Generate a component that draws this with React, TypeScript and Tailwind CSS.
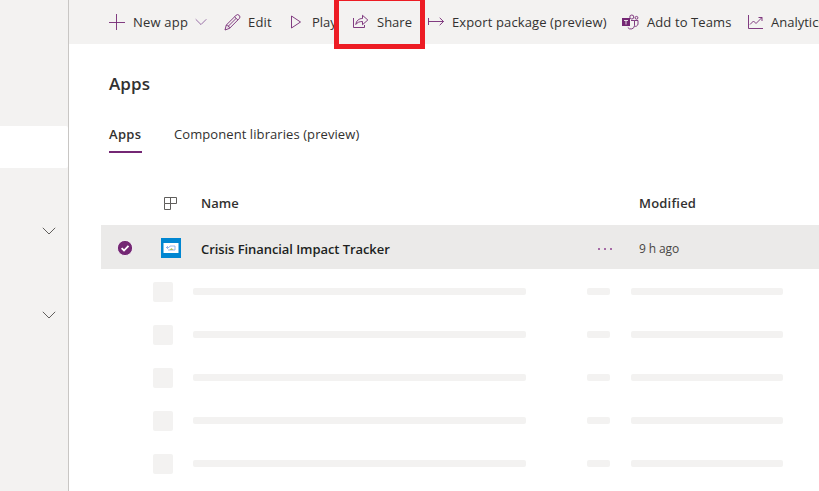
import type { ReactNode } from 'react';

const stroke = { fill: 'none', stroke: '#742774', strokeWidth: 0.9 };

function Chevron({ className }: { className: string }) {
  return (
    <svg className={className} width="14" height="8" viewBox="0 0 14 8" fill="none" stroke="currentColor">
      <path d="M.8.8 7 7 13.2.8" />
    </svg>
  );
}

function PlusIcon() {
  return (
    <svg width="17" height="16" viewBox="0 0 17 16" {...stroke}>
      <path d="M8.5 0v16M1 8.5h16" />
    </svg>
  );
}

function EditIcon() {
  return (
    <svg width="17" height="17" viewBox="0 0 17 17" {...stroke}>
      <path d="M1 16l1.3-5L12 1.4a2.2 2.2 0 0 1 3.2 0 2.2 2.2 0 0 1 0 3.2L5.6 14.3 1 16zM10.6 2.8l3.4 3.4M2.3 11c1.8.2 3 1.5 3.3 3.3M3.7 12.8l8.3-8.3" />
    </svg>
  );
}

function PlayIcon() {
  return (
    <svg width="13" height="16" viewBox="0 0 13 16" {...stroke}>
      <path d="M1.5 2v12L10.500 8z" />
    </svg>
  );
}

function ShareIcon() {
  return (
    <svg width="17" height="16" viewBox="0 0 17 16" {...stroke}>
      <path d="M1.5 4v9.500h11V11M3.800 10.500C4.300 6.700 6.800 4.500 10.500 4.500V1.300L15.800 6l-5.300 4.700V7.500C7.500 7.500 5.300 8.300 3.800 10.500z" />
    </svg>
  );
}

function ExportIcon() {
  return (
    <svg width="17" height="16" viewBox="0 0 17 16" {...stroke}>
      <path d="M.5 4v7M.5 7.500h15M11.700 3.800l3.800 3.700-3.800 3.700" />
    </svg>
  );
}

function TeamsIcon() {
  return (
    <svg width="18" height="17" viewBox="0 0 18 17" {...stroke}>
      <circle cx="9.800" cy="3" r="2" />
      <circle cx="14.500" cy="3.800" r="1.400" />
      <path d="M9 6.500h3.500v5a3.700 3.700 0 0 1-6.700 2M12.500 6.500h3.500V10a2.600 2.600 0 0 1-3.500 2.200" />
      <path d="M0 4h8v8H0z" fill="#742774" stroke="none" />
      <path d="M2 6.500h4M4 6.500v4" stroke="#f3f2f1" />
    </svg>
  );
}

function AnalyticsIcon() {
  return (
    <svg width="16" height="16" viewBox="0 0 16 16" {...stroke}>
      <path d="M.5 1v13.500H15M2 10.500l3.500-3.500 2.500 2.500L14 3.500M10.500 3.500h3.500V7" />
    </svg>
  );
}

function Command({ width, gutter, icon, children }: { width: string; gutter: string; icon: ReactNode; children: ReactNode }) {
  return (
    <div className={`flex h-full shrink-0 items-center whitespace-nowrap ${width}`}>
      <span className={`flex shrink-0 ${gutter}`}>{icon}</span>
      {children}
    </div>
  );
}

function Toolbar() {
  return (
    <div className="relative flex h-11 shrink-0 bg-[#f3f2f1] pl-[39px] text-[13px] text-[#323130]">
      <Command width="w-[116px]" gutter="w-[25px]" icon={<PlusIcon />}>
        <span className="pt-0.5 tracking-[0.2px]">New app</span>
        <Chevron className="ml-[7px] w-3 text-[#8a5a9a]" />
      </Command>
      <Command width="w-[66px]" gutter="w-6" icon={<EditIcon />}><span className="pt-0.5 tracking-[0.2px]">Edit</span></Command>
      <Command width="w-[62px]" gutter="w-[22px]" icon={<PlayIcon />}><span className="pt-0.5">Play</span></Command>
      <Command width="w-[76px]" gutter="w-[25px]" icon={<ShareIcon />}><span className="pt-0.5">Share</span></Command>
      <Command width="w-[194px]" gutter="w-6" icon={<ExportIcon />}>
        <span className="pt-0.5 tracking-[0.12px]">Export package (preview)</span>
      </Command>
      <Command width="w-[126px]" gutter="w-[25px]" icon={<TeamsIcon />}>
        <span className="pt-0.5 tracking-[0.1px]">Add to Teams</span>
      </Command>
      <Command width="w-[90px]" gutter="w-[23px]" icon={<AnalyticsIcon />}><span className="pt-0.5">Analytics</span></Command>
      <div className="absolute -top-1 left-[265px] h-[53px] w-[91px] border-[5px] border-[#ed1c24]" />
    </div>
  );
}

function Sidebar() {
  return (
    <aside className="flex w-[69px] shrink-0 flex-col border-r border-[#c8c6c4] bg-[#f3f2f1] pt-[126px] text-[#605e5c]">
      <div className="h-[42px] rounded-r-[2px] bg-white" />
      <div className="flex h-[126px] items-center justify-end pr-3"><Chevron className="" /></div>
      <div className="flex h-[42px] items-center justify-end pr-3"><Chevron className="" /></div>
    </aside>
  );
}

function SkeletonRow() {
  return (
    <div className="flex h-[43px] items-center pl-[52px]">
      <div className="h-5 w-5 rounded-[2px] bg-[#f3f2f1]" />
      <div className="ml-5 h-[7px] w-[333px] rounded-[2px] bg-[#f3f2f1]" />
      <div className="ml-[61px] h-[7px] w-[23px] rounded-[2px] bg-[#f3f2f1]" />
      <div className="ml-[21px] h-[7px] w-[152px] rounded-[2px] bg-[#f3f2f1]" />
    </div>
  );
}

function AppsTable() {
  return (
    <div className="ml-8 mt-[28px] text-[13px] text-[#323130]">
      <div className="flex h-11 items-center font-semibold">
        <div className="w-[100px] pl-[62px]">
          <svg width="16" height="15" viewBox="0 0 16 15" fill="none" stroke="#605e5c">
            <path d="M1.500 1.500h12v6h-12zM1.500 7.500v6h6v-12" />
          </svg>
        </div>
        <div className="w-[438px] pt-0.5">Name</div>
        <div className="pt-0.5 tracking-[0.2px]">Modified</div>
      </div>
      <div className="flex h-11 items-center bg-[#ebeae9]">
        <div className="w-[60px] pt-0.5 pl-4">
          <svg width="16" height="16" viewBox="0 0 16 16">
            <circle cx="8" cy="8" r="7.600" fill="#742774" stroke="#fff" strokeWidth=".8" />
            <path d="M4.600 8.200 7 10.500l4.500-4.700" fill="none" stroke="#fff" strokeWidth="1.800" />
          </svg>
        </div>
        <div className="w-10 pt-0.5">
          <svg width="20" height="20" viewBox="0 0 20 20">
            <path d="M0 0h20v20H0z" fill="#0086d1" />
            <path d="M2.500 5h15v10h-15z" fill="#fff" />
            <path d="M5 9.500h3l1-1.500h5v4H7M7 8l-1.500 1.500L7 11" fill="none" stroke="#7ea6e8" strokeWidth=".8" />
            <path d="m8.500 12 2-2 2 2z" fill="#a8bd63" />
          </svg>
        </div>
        <div className="w-[396px] pt-[5px] font-semibold tracking-[-0.07px] text-[#201f1e]">Crisis Financial Impact Tracker</div>
        <svg className="mt-1" width="42" height="4" viewBox="0 0 42 4" fill="#a66ba6">
          <path d="M1 1h2v2H1zM7 1h2v2H7zM13 1h2v2h-2z" />
        </svg>
        <div className="pt-[3px] text-[12px] tracking-[-0.1px] text-[#484644]">9 h ago</div>
      </div>
      <div className="pt-px">
        <SkeletonRow />
        <SkeletonRow />
        <SkeletonRow />
        <SkeletonRow />
        <SkeletonRow />
      </div>
    </div>
  );
}

export default function App() {
  return (
    <div className="flex h-[491px] w-[819px] overflow-hidden bg-white font-['Open_Sans','Noto_Sans',sans-serif]">
      <Sidebar />
      <main className="flex w-[750px] flex-col">
        <Toolbar />
        <h1 className="ml-10 mt-7 h-6 text-[17px] leading-6 font-semibold tracking-[0.1px] text-[#323130]">Apps</h1>
        <nav className="ml-10 mt-[19px] flex h-[38px] gap-8 text-[13px] leading-[38px] text-[#323130]">
          <div className="w-[33px] border-b-2 border-[#742774] font-semibold tracking-[0.3px]">Apps</div>
          <div className="tracking-[0.08px]">Component libraries (preview)</div>
        </nav>
        <AppsTable />
      </main>
    </div>
  );
}
